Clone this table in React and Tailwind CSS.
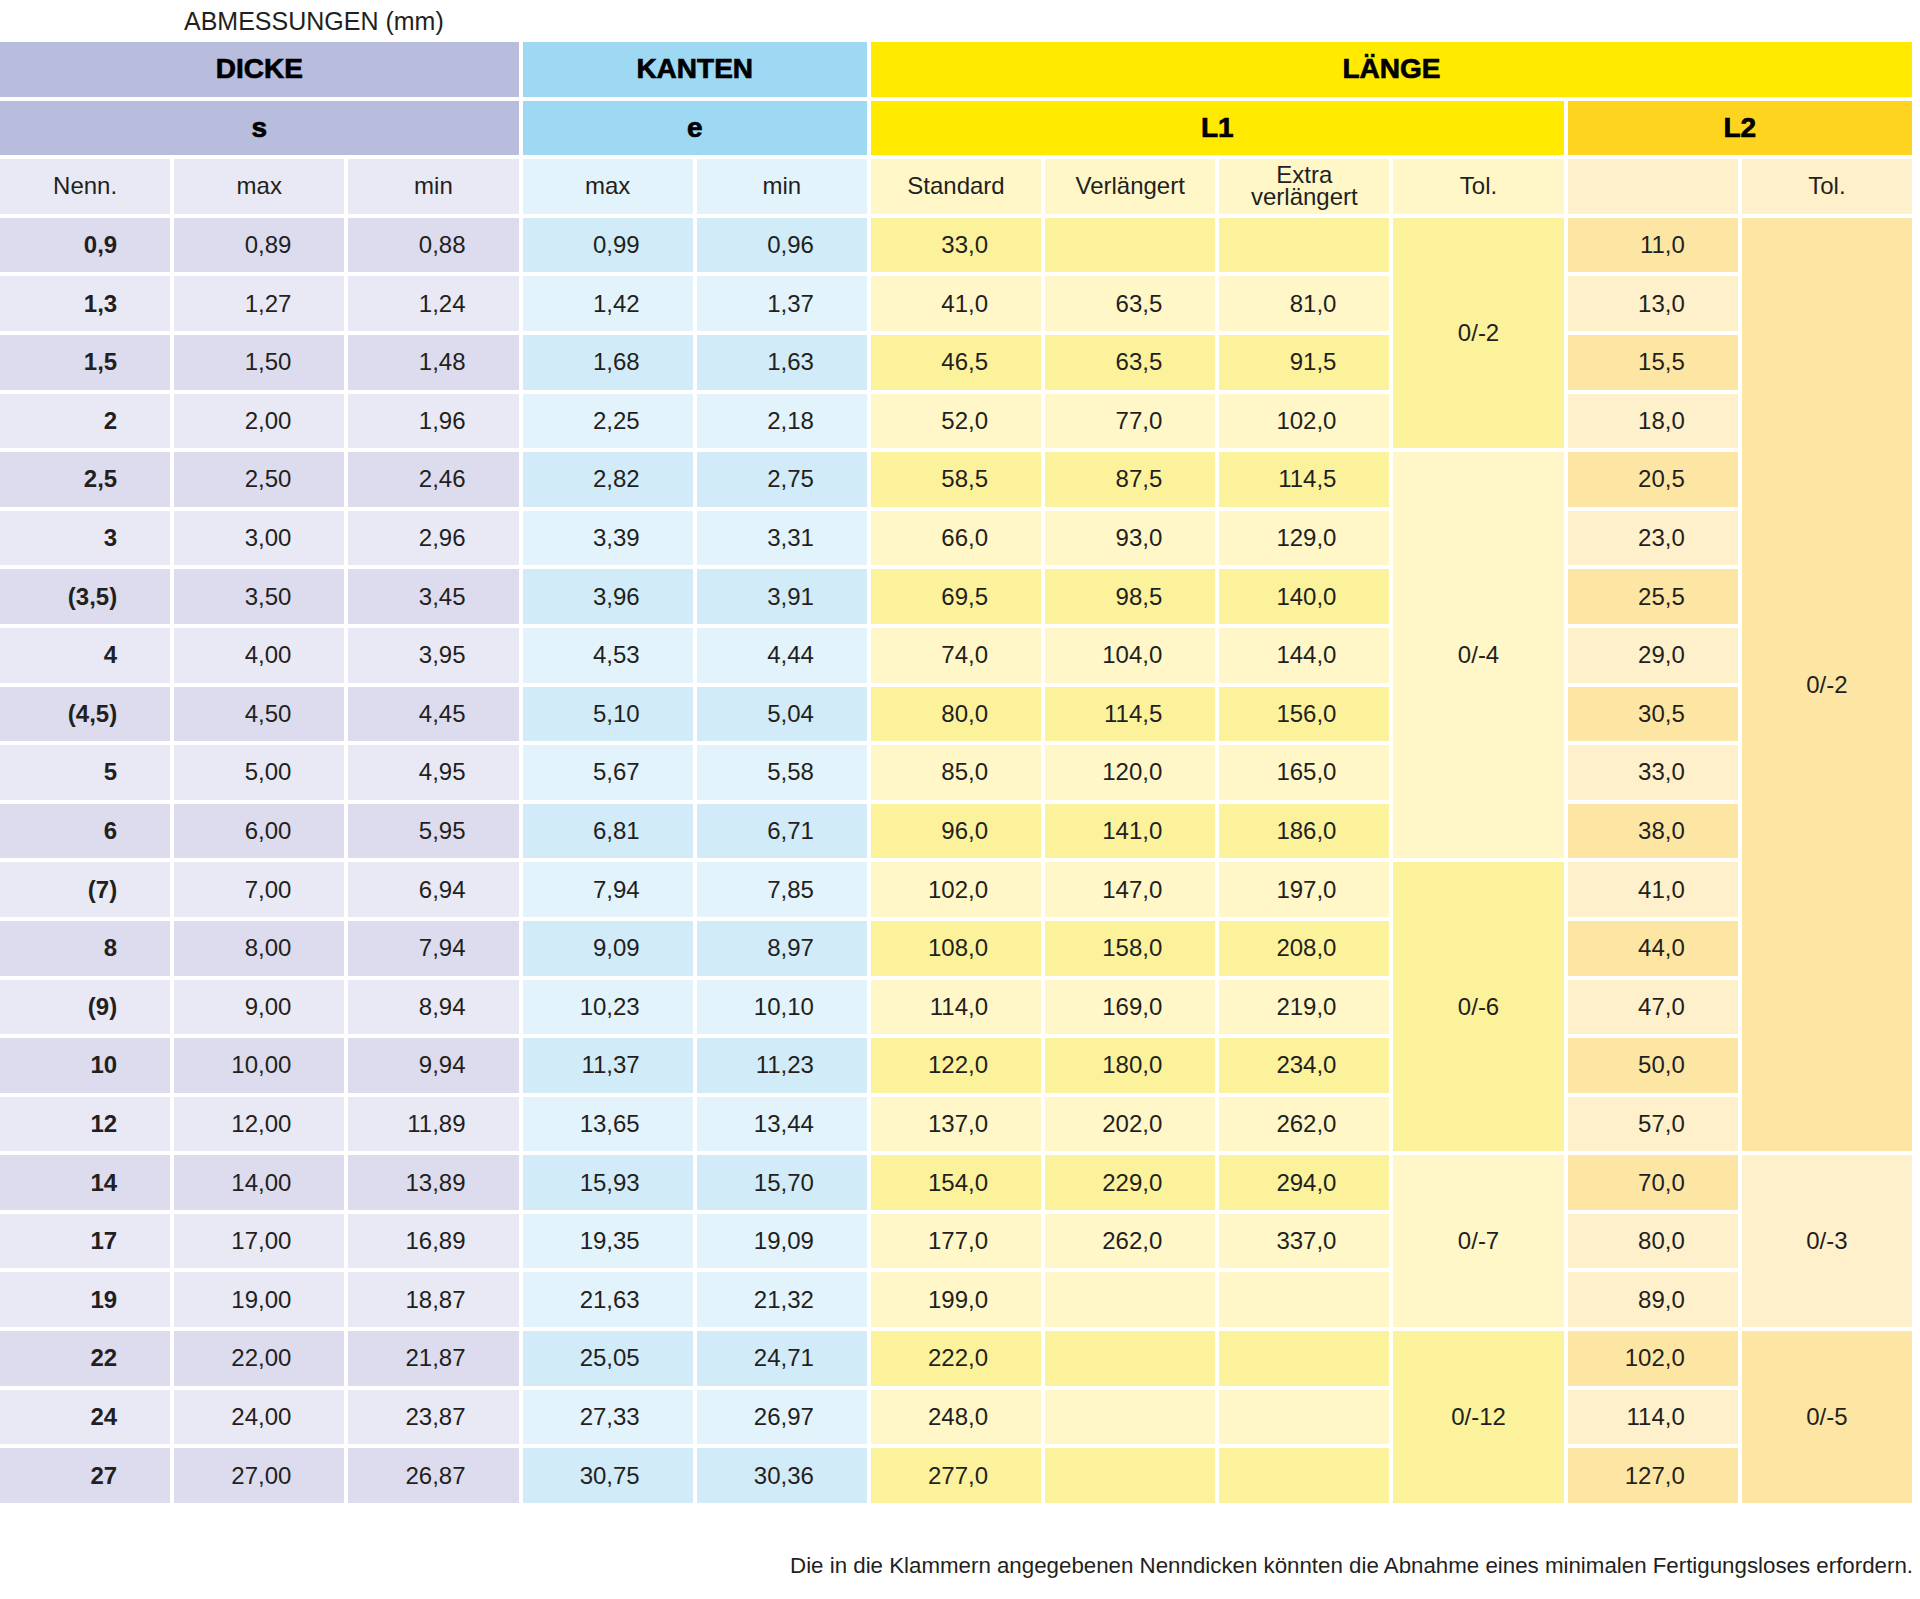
const ROWS = [
  ["0,9", "0,89", "0,88", "0,99", "0,96", "33,0", "", "", "11,0"],
  ["1,3", "1,27", "1,24", "1,42", "1,37", "41,0", "63,5", "81,0", "13,0"],
  ["1,5", "1,50", "1,48", "1,68", "1,63", "46,5", "63,5", "91,5", "15,5"],
  ["2", "2,00", "1,96", "2,25", "2,18", "52,0", "77,0", "102,0", "18,0"],
  ["2,5", "2,50", "2,46", "2,82", "2,75", "58,5", "87,5", "114,5", "20,5"],
  ["3", "3,00", "2,96", "3,39", "3,31", "66,0", "93,0", "129,0", "23,0"],
  ["(3,5)", "3,50", "3,45", "3,96", "3,91", "69,5", "98,5", "140,0", "25,5"],
  ["4", "4,00", "3,95", "4,53", "4,44", "74,0", "104,0", "144,0", "29,0"],
  ["(4,5)", "4,50", "4,45", "5,10", "5,04", "80,0", "114,5", "156,0", "30,5"],
  ["5", "5,00", "4,95", "5,67", "5,58", "85,0", "120,0", "165,0", "33,0"],
  ["6", "6,00", "5,95", "6,81", "6,71", "96,0", "141,0", "186,0", "38,0"],
  ["(7)", "7,00", "6,94", "7,94", "7,85", "102,0", "147,0", "197,0", "41,0"],
  ["8", "8,00", "7,94", "9,09", "8,97", "108,0", "158,0", "208,0", "44,0"],
  ["(9)", "9,00", "8,94", "10,23", "10,10", "114,0", "169,0", "219,0", "47,0"],
  ["10", "10,00", "9,94", "11,37", "11,23", "122,0", "180,0", "234,0", "50,0"],
  ["12", "12,00", "11,89", "13,65", "13,44", "137,0", "202,0", "262,0", "57,0"],
  ["14", "14,00", "13,89", "15,93", "15,70", "154,0", "229,0", "294,0", "70,0"],
  ["17", "17,00", "16,89", "19,35", "19,09", "177,0", "262,0", "337,0", "80,0"],
  ["19", "19,00", "18,87", "21,63", "21,32", "199,0", "", "", "89,0"],
  ["22", "22,00", "21,87", "25,05", "24,71", "222,0", "", "", "102,0"],
  ["24", "24,00", "23,87", "27,33", "26,97", "248,0", "", "", "114,0"],
  ["27", "27,00", "26,87", "30,75", "30,36", "277,0", "", "", "127,0"],
];

// tolerance blocks: start row -> [span, label, dark]
const TOL_L1 = { 0: [4, "0/-2", true], 4: [7, "0/-4", false], 11: [5, "0/-6", true], 16: [3, "0/-7", false], 19: [3, "0/-12", true] };
const TOL_L2 = { 0: [16, "0/-2", true], 16: [3, "0/-3", false], 19: [3, "0/-5", true] };

const SPAN = { 3: "row-span-3", 4: "row-span-4", 5: "row-span-5", 7: "row-span-7", 16: "row-span-16" };

const BG = {
  dicke: ["bg-[#dcdcee]", "bg-[#e9e9f5]"],
  kanten: ["bg-[#d2ebf8]", "bg-[#e3f3fc]"],
  l1: ["bg-[#fcf29c]", "bg-[#fff7c8]"],
  l2: ["bg-[#fde6a3]", "bg-[#fef0ca]"],
};

const GROUP = ["dicke", "dicke", "dicke", "kanten", "kanten", "l1", "l1", "l1"];

const head = "flex items-center justify-center text-[28px] font-bold text-black [-webkit-text-stroke:0.7px_black]";
const sub = "flex items-center justify-center text-[24px] text-[#231f20]";
const num = "flex items-center justify-end pr-[53px] text-[24px] text-[#231f20]";

// rows 17 and 19 are both light in the print, so the stripes flip after index 17
const isDark = (r) => (r < 18 ? r % 2 === 0 : r % 2 === 1);

export default function App() {
  const cells = [];
  ROWS.forEach((row, r) => {
    const shade = isDark(r) ? 0 : 1;
    row.slice(0, 8).forEach((v, c) => {
      cells.push(
        <div key={`${r}-${c}`} className={`${num} ${BG[GROUP[c]][shade]} ${c === 0 ? "font-bold" : ""}`}>
          {v}
        </div>
      );
    });
    if (TOL_L1[r]) {
      const [span, label, dark] = TOL_L1[r];
      cells.push(
        <div key={`${r}-t1`} className={`${sub} ${SPAN[span]} ${BG.l1[dark ? 0 : 1]}`}>
          {label}
        </div>
      );
    }
    cells.push(
      <div key={`${r}-l2`} className={`${num} ${BG.l2[shade]}`}>
        {row[8]}
      </div>
    );
    if (TOL_L2[r]) {
      const [span, label, dark] = TOL_L2[r];
      cells.push(
        <div key={`${r}-t2`} className={`${sub} ${SPAN[span]} ${BG.l2[dark ? 0 : 1]}`}>
          {label}
        </div>
      );
    }
  });

  return (
    <div className="min-h-[1599px] w-full bg-white font-['Liberation_Sans',Arial,sans-serif] text-[#231f20]">
      <div className="h-[42px] pl-[184px] pt-[7px] text-[25px] leading-[28px]">ABMESSUNGEN (mm)</div>

      <div className="grid w-[1912px] grid-cols-11 auto-rows-[54.6px] gap-[4px]">
        <div className={`${head} col-span-3 bg-[#b8bcdd]`}>DICKE</div>
        <div className={`${head} col-span-2 bg-[#9ed8f3]`}>KANTEN</div>
        <div className={`${head} col-span-6 bg-[#ffea00]`}>LÄNGE</div>

        <div className={`${head} col-span-3 bg-[#b8bcdd]`}>s</div>
        <div className={`${head} col-span-2 bg-[#9ed8f3]`}>e</div>
        <div className={`${head} col-span-4 bg-[#ffea00]`}>L1</div>
        <div className={`${head} col-span-2 bg-[#ffd420]`}>L2</div>

        <div className={`${sub} bg-[#e9e9f5]`}>Nenn.</div>
        <div className={`${sub} bg-[#e9e9f5]`}>max</div>
        <div className={`${sub} bg-[#e9e9f5]`}>min</div>
        <div className={`${sub} bg-[#e3f3fc]`}>max</div>
        <div className={`${sub} bg-[#e3f3fc]`}>min</div>
        <div className={`${sub} bg-[#fff7c8]`}>Standard</div>
        <div className={`${sub} bg-[#fff7c8]`}>Verlängert</div>
        <div className={`${sub} bg-[#fff7c8] flex-col text-center leading-[22px]`}>
          <span>Extra</span>
          <span>verlängert</span>
        </div>
        <div className={`${sub} bg-[#fff7c8]`}>Tol.</div>
        <div className={`${sub} bg-[#fef0ca]`}></div>
        <div className={`${sub} bg-[#fef0ca]`}>Tol.</div>

        {cells}
      </div>

      <div className="mt-[49px] w-[1913px] text-right text-[22.3px] leading-[28px]">
        Die in die Klammern angegebenen Nenndicken könnten die Abnahme eines minimalen Fertigungsloses erfordern.
      </div>
    </div>
  );
}
